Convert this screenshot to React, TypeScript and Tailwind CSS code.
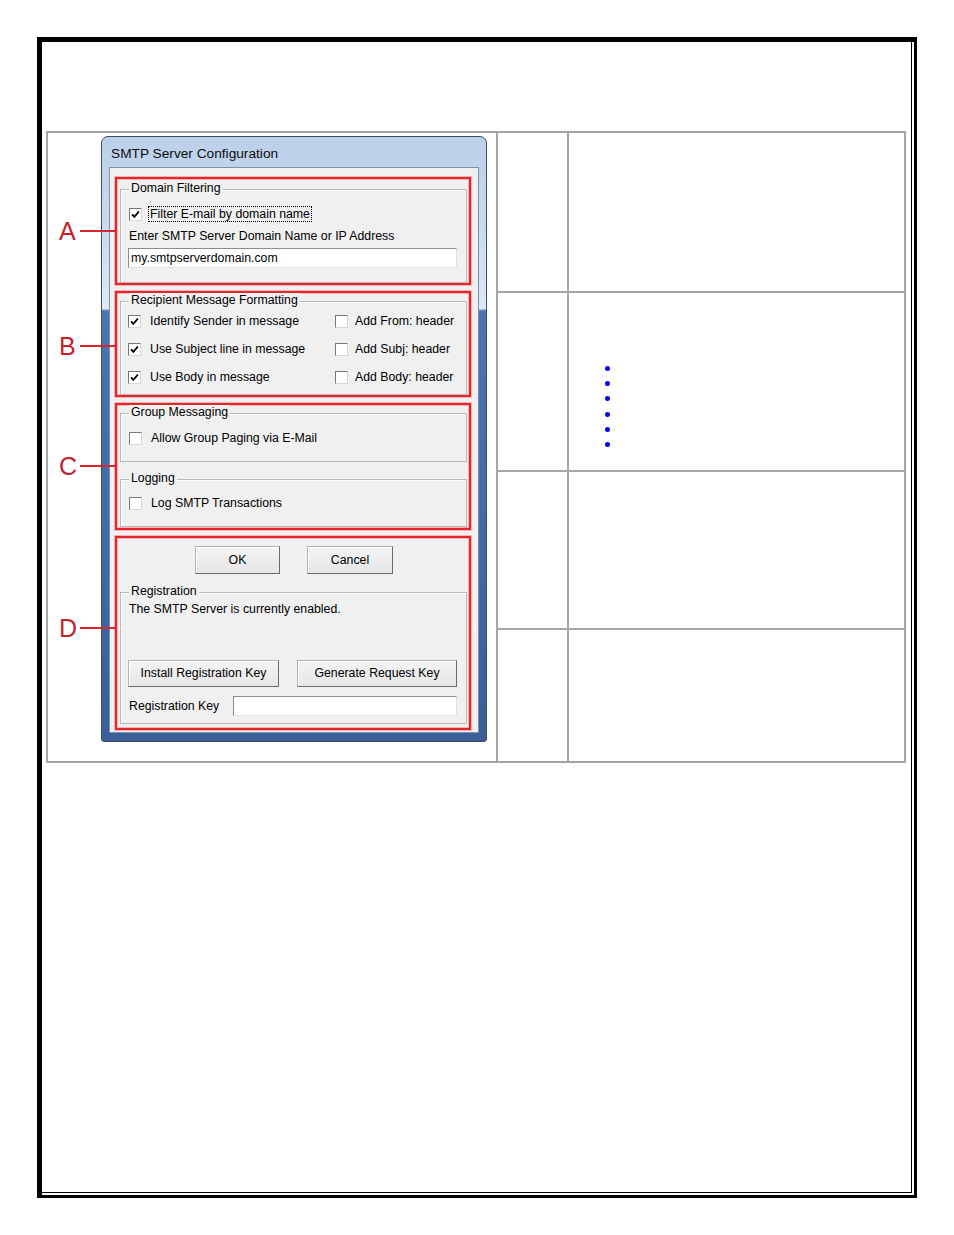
import type { ReactNode } from "react";

const RED = "#d8262d";

function CheckBox({ checked }: { checked?: boolean }) {
  return (
    <span className="w-[13px] h-[13px] shrink-0 bg-white border border-[#7a7a7a] border-r-[#d6d6d6] border-b-[#d6d6d6] flex items-center justify-center">
      {checked && (
        <svg width="9" height="9" viewBox="0 0 9 9">
          <path d="M1.1 4.3 L3.4 6.8 L7.9 1.5" fill="none" stroke="#000" strokeWidth="1.9" />
        </svg>
      )}
    </span>
  );
}

function Check({ label, checked, className = "" }: { label: string; checked?: boolean; className?: string }) {
  return (
    <div className={`flex items-center h-[16px] ${className}`}>
      <CheckBox checked={checked} />
      <span className="ml-[9px] leading-[15px] whitespace-nowrap">{label}</span>
    </div>
  );
}

function GroupBox({ legend, className = "", children }: { legend: string; className?: string; children?: ReactNode }) {
  return (
    <div className={`relative ml-[3px] w-[347px] border border-[#b9b9b9] shadow-[inset_1px_1px_0_#ffffff] ${className}`}>
      <span className="absolute left-[8px] -top-[9px] px-[2px] bg-[#f0f0f0] leading-[15px] whitespace-nowrap">{legend}</span>
      {children}
    </div>
  );
}

function RedBox({ className = "", children }: { className?: string; children?: ReactNode }) {
  return (
    <div className={`w-[356px] ml-[5px] border-2 border-[#e4262c] shadow-[0_0_0_1px_#f6b3b3,inset_0_0_0_1px_#f6b3b3] ${className}`}>
      {children}
    </div>
  );
}

function WinButton({ label, className = "" }: { label: string; className?: string }) {
  return (
    <div className={`flex items-center justify-center bg-[linear-gradient(to_bottom,#f4f4f4,#e6e6e6)] border border-[#b4b4b4] border-r-[#6a6a6a] border-b-[#6a6a6a] shadow-[inset_1px_1px_0_#ffffff] ${className}`}>
      {label}
    </div>
  );
}

function TextBox({ value = "", className = "" }: { value?: string; className?: string }) {
  return (
    <div className={`h-[20px] bg-white border border-[#8c8c8c] border-r-[#e2e2e2] border-b-[#e2e2e2] flex items-center pl-[2px] leading-[15px] ${className}`}>
      {value}
    </div>
  );
}

function Callout({ letter, top }: { letter: string; top: string }) {
  return (
    <div className={`absolute left-[11px] ${top} flex items-center h-[28px]`}>
      <span className="w-[21px] text-[25px] leading-[28px] text-[#c4222a] font-['Liberation_Sans',Arial,sans-serif]">{letter}</span>
      <div className="h-[2px] w-[35px]" style={{ backgroundColor: RED }} />
    </div>
  );
}

function SmtpDialog() {
  return (
    <div className="w-[386px] h-[606px] flex flex-col rounded-t-[7px] rounded-b-[3px] border border-[#3e4c60] bg-[linear-gradient(to_bottom,#bcd0ea_0%,#c9daef_15%,#dfe8f4_28.4%,#4c74ae_28.8%,#4069a5_70%,#3a5f97_100%)] font-['Liberation_Sans',Arial,sans-serif] text-[12.3px] text-black">
      {/* Title bar */}
      <div className="h-[30px] shrink-0 flex items-center pl-[9px] pt-[4px] text-[13.7px] text-[#0c0c0c]">SMTP Server Configuration</div>

      {/* Client area */}
      <div className="mx-[7px] mb-[8px] flex-1 bg-[#f0f0f0] border border-[#7f90aa] pt-[9px]">
        {/* A: Domain Filtering */}
        <RedBox className="h-[108px]">
          <GroupBox legend="Domain Filtering" className="mt-[10px] h-[94px]">
            <div className="flex items-center h-[16px] mt-[16px] ml-[8px]">
              <CheckBox checked />
              <span className="ml-[6px] px-[1px] border border-dotted border-black leading-[14px] whitespace-nowrap">Filter E-mail by domain name</span>
            </div>
            <div className="mt-[7px] ml-[8px] leading-[15px]">Enter SMTP Server Domain Name or IP Address</div>
            <TextBox value="my.smtpserverdomain.com" className="mt-[4px] ml-[7px] w-[329px]" />
          </GroupBox>
        </RedBox>

        {/* B: Recipient Message Formatting */}
        <RedBox className="mt-[6px] h-[106px]">
          <GroupBox legend="Recipient Message Formatting" className="mt-[8px] h-[94px]">
            <div className="pt-[11px] pl-[7px] grid grid-cols-[207px_1fr] gap-y-[12px]">
              <Check label="Identify Sender in message" checked />
              <Check label="Add From: header" className="[&>span:last-child]:ml-[7px]" />
              <Check label="Use Subject line in message" checked />
              <Check label="Add Subj: header" className="[&>span:last-child]:ml-[7px]" />
              <Check label="Use Body in message" checked />
              <Check label="Add Body: header" className="[&>span:last-child]:ml-[7px]" />
            </div>
          </GroupBox>
        </RedBox>

        {/* C: Group Messaging + Logging */}
        <RedBox className="mt-[6px] h-[127px]">
          <GroupBox legend="Group Messaging" className="mt-[8px] h-[49px]">
            <Check label="Allow Group Paging via E-Mail" className="mt-[16px] ml-[8px]" />
          </GroupBox>
          <GroupBox legend="Logging" className="mt-[17px] h-[48px]">
            <Check label="Log SMTP Transactions" className="mt-[15px] ml-[8px]" />
          </GroupBox>
        </RedBox>

        {/* D: Buttons + Registration */}
        <RedBox className="mt-[6px] h-[194px]">
          <div className="flex mt-[8px] ml-[78px] gap-[27px]">
            <WinButton label="OK" className="w-[85px] h-[28px]" />
            <WinButton label="Cancel" className="w-[86px] h-[28px]" />
          </div>
          <GroupBox legend="Registration" className="mt-[18px] h-[132px]">
            <div className="mt-[9px] ml-[8px] leading-[15px]">The SMTP Server is currently enabled.</div>
            <div className="flex mt-[43px] ml-[7px] gap-[18px]">
              <WinButton label="Install Registration Key" className="w-[151px] h-[27px]" />
              <WinButton label="Generate Request Key" className="w-[160px] h-[27px]" />
            </div>
            <div className="flex items-center mt-[9px]">
              <span className="w-[112px] pl-[8px] leading-[15px]">Registration Key</span>
              <TextBox className="w-[224px]" />
            </div>
          </GroupBox>
        </RedBox>
      </div>
    </div>
  );
}

function TableRow({ height, last, children }: { height: string; last?: boolean; children?: ReactNode }) {
  return (
    <div className={`flex ${height} ${last ? "" : "border-b-2 border-[#a5a5a5]"}`}>
      <div className="w-[71px] shrink-0 border-r-2 border-[#a5a5a5]" />
      <div className="flex-1 relative">{children}</div>
    </div>
  );
}

export default function App() {
  return (
    <div className="w-[954px] h-[1235px] bg-white overflow-hidden pt-[37px]">
      <div className="ml-[37px] w-[880px] h-[1161px] border-t-[5px] border-l-[5px] border-r-[3px] border-b-[3px] border-black">
        <div className="h-[1151px] mr-[2px] pt-[89px] border-r border-b border-black">
          {/* Table */}
          <div className="ml-[4px] w-[860px] h-[632px] border-2 border-[#a5a5a5] flex">
            {/* Screenshot column */}
            <div className="relative w-[450px] shrink-0 border-r-2 border-[#a5a5a5] pl-[53px] pt-[3px]">
              <SmtpDialog />
              <Callout letter="A" top="top-[84px]" />
              <Callout letter="B" top="top-[199px]" />
              <Callout letter="C" top="top-[319px]" />
              <Callout letter="D" top="top-[481px]" />
            </div>

            {/* Description columns */}
            <div className="flex-1 flex flex-col">
              <TableRow height="h-[160px]" />
              <TableRow height="h-[179px]">
                <div className="pt-[68px] pl-[36px] flex flex-col">
                  {[0, 1, 2, 3, 4, 5].map((i) => (
                    <div key={i} className="h-[15.2px] flex items-center">
                      <span className="w-[5px] h-[5px] rounded-full bg-[#0000ff]" />
                    </div>
                  ))}
                </div>
              </TableRow>
              <TableRow height="h-[158px]" />
              <TableRow height="h-[131px]" last />
            </div>
          </div>
        </div>
      </div>
    </div>
  );
}
